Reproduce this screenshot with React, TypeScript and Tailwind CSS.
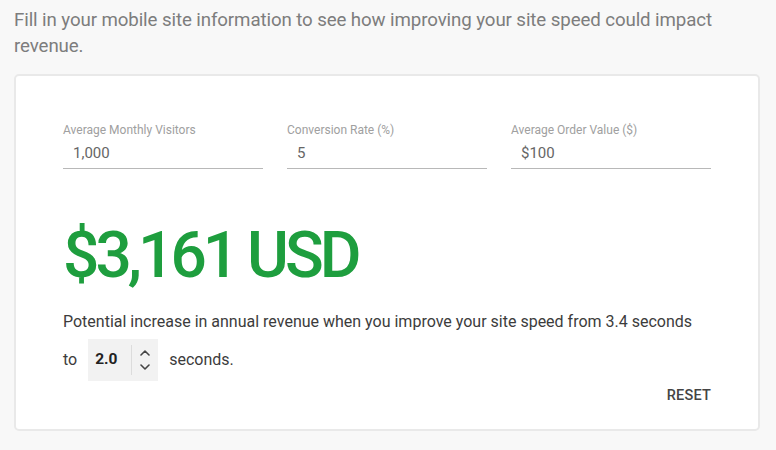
import React from "react";

const fields = [
  { label: "Average Monthly Visitors", value: "1,000" },
  { label: "Conversion Rate (%)", value: "5" },
  { label: "Average Order Value ($)", value: "$100" },
];

function Field({ label, value }: { label: string; value: string }) {
  return (
    <div className="flex flex-col">
      <span className="text-[12px] leading-[14px] text-[#a0a0a0]">{label}</span>
      <div className="mt-[6px] border-b-[1.5px] border-[#b8b8b8] pb-[5px] pl-[10px] text-[15px] leading-[20px] text-[#666]">
        {value}
      </div>
    </div>
  );
}

export default function App() {
  return (
    <div
      className="min-h-[450px] w-[776px] bg-[#f8f8f8] px-[14px] pt-[7px]"
      style={{ fontFamily: "Roboto, 'Liberation Sans', sans-serif" }}
    >
      <p className="w-[725px] text-[18.7px] leading-[26px] text-[#7d7d7d] tracking-[-0.1px]">
        Fill in your mobile site information to see how improving your site speed could impact
        revenue.
      </p>

      <div className="mt-[15px] w-[746px] rounded-[5px] border-2 border-[#e9e9e9] bg-white px-[47px] pt-[47px] pb-[22px]">
        <div className="grid w-[648px] grid-cols-3 gap-6">
          {fields.map((f) => (
            <Field key={f.label} label={f.label} value={f.value} />
          ))}
        </div>

        <div className="mt-[51px] text-[64px] font-medium leading-[72px] tracking-[-4px] text-[#1e9e3e]">
          $3,161 USD
        </div>

        <p className="mt-[19px] text-[16px] leading-[22px] text-[#3c3c3c]">
          Potential increase in annual revenue when you improve your site speed from 3.4 seconds
        </p>

        <div className="mt-[6px] flex items-center text-[16px] text-[#3c3c3c]">
          <span>to</span>
          <div className="ml-[11px] flex h-[42px] w-[70px] items-center bg-[#f2f2f2]">
            <span className="ml-[7px] w-[36px] text-[15.5px] font-bold text-[#222]">2.0</span>
            <div className="h-[30px] w-px bg-[#dcdcdc]" />
            <div className="flex flex-1 flex-col items-center justify-center gap-[8px]">
              <svg width="10" height="6" viewBox="0 0 10 6" fill="none">
                <path d="M1 5l4-4 4 4" stroke="#444" strokeWidth="1.6" strokeLinecap="round" strokeLinejoin="round" />
              </svg>
              <svg width="10" height="6" viewBox="0 0 10 6" fill="none">
                <path d="M1 1l4 4 4-4" stroke="#444" strokeWidth="1.6" strokeLinecap="round" strokeLinejoin="round" />
              </svg>
            </div>
          </div>
          <span className="ml-[11px]">seconds.</span>
        </div>

        <div className="mt-[4px] flex w-[648px] justify-end">
          <button className="text-[14.5px] font-medium tracking-[0.2px] text-[#444]">RESET</button>
        </div>
      </div>
    </div>
  );
}
